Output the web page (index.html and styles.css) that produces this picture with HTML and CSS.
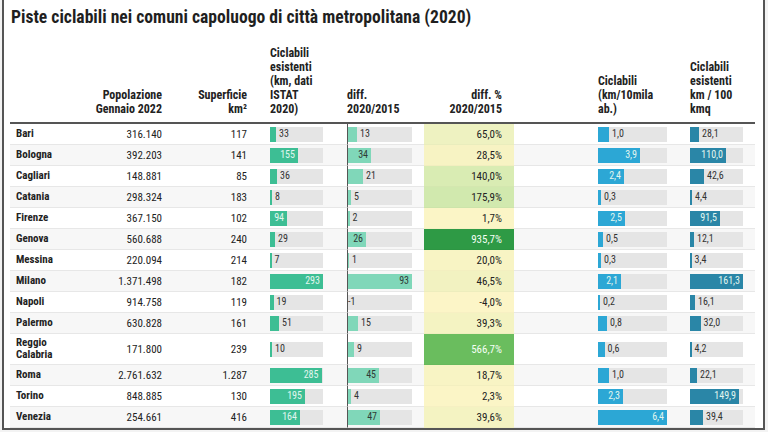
FILE: index.html
```html
<!DOCTYPE html>
<html lang="it">
<head>
<meta charset="utf-8">
<title>Piste ciclabili</title>
<link rel="stylesheet" href="styles.css">
</head>
<body>
<div class="frame">
  <h1 class="title">Piste ciclabili nei comuni capoluogo di città metropolitana (2020)</h1>
  <table class="data">
    <colgroup>
      <col class="w-city"><col class="w-pop"><col class="w-sup"><col class="w-km"><col class="w-diff"><col class="w-pct"><col class="w-ab"><col class="w-kmq">
    </colgroup>
    <thead>
      <tr>
        <th class="c-city"></th>
        <th class="c-pop">Popolazione<br>Gennaio 2022</th>
        <th class="c-sup">Superficie<br>km²</th>
        <th class="c-km">Ciclabili<br>esistenti<br>(km, dati<br>ISTAT<br>2020)</th>
        <th class="c-diff">diff.<br>2020/2015</th>
        <th class="c-pct">diff. %<br>2020/2015</th>
        <th class="c-ab">Ciclabili<br>(km/10mila<br>ab.)</th>
        <th class="c-kmq">Ciclabili<br>esistenti<br>km / 100<br>kmq</th>
      </tr>
    </thead>
    <tbody>
      <tr>
        <td class="c-city">Bari</td><td class="c-pop">316.140</td><td class="c-sup">117</td>
        <td class="c-km"><div class="track t-km"><div class="bar b-km" style="width:6px"></div><span class="lbl">33</span></div></td>
        <td class="c-diff"><div class="track t-diff"><div class="bar b-diff" style="width:9px"></div><span class="lbl">13</span></div></td>
        <td class="c-pct" style="background:#eef2c1">65,0%</td>
        <td class="c-ab"><div class="track t-ab"><div class="bar b-ab" style="width:11px"></div><span class="lbl">1,0</span></div></td>
        <td class="c-kmq"><div class="track t-kmq"><div class="bar b-kmq" style="width:9px"></div><span class="lbl">28,1</span></div></td>
      </tr>
      <tr>
        <td class="c-city">Bologna</td><td class="c-pop">392.203</td><td class="c-sup">141</td>
        <td class="c-km"><div class="track t-km"><div class="bar b-km" style="width:28px"><span class="lbl in">155</span></div></div></td>
        <td class="c-diff"><div class="track t-diff"><div class="bar b-diff" style="width:23px"><span class="lbl in dark">34</span></div></div></td>
        <td class="c-pct" style="background:#f7f3c3">28,5%</td>
        <td class="c-ab"><div class="track t-ab"><div class="bar b-ab" style="width:42px"><span class="lbl in">3,9</span></div></div></td>
        <td class="c-kmq"><div class="track t-kmq"><div class="bar b-kmq" style="width:36px"><span class="lbl in">110,0</span></div></div></td>
      </tr>
      <tr>
        <td class="c-city">Cagliari</td><td class="c-pop">148.881</td><td class="c-sup">85</td>
        <td class="c-km"><div class="track t-km"><div class="bar b-km" style="width:7px"></div><span class="lbl">36</span></div></td>
        <td class="c-diff"><div class="track t-diff"><div class="bar b-diff" style="width:15px"></div><span class="lbl">21</span></div></td>
        <td class="c-pct" style="background:#d9ecb3">140,0%</td>
        <td class="c-ab"><div class="track t-ab"><div class="bar b-ab" style="width:26px"><span class="lbl in">2,4</span></div></div></td>
        <td class="c-kmq"><div class="track t-kmq"><div class="bar b-kmq" style="width:14px"></div><span class="lbl">42,6</span></div></td>
      </tr>
      <tr>
        <td class="c-city">Catania</td><td class="c-pop">298.324</td><td class="c-sup">183</td>
        <td class="c-km"><div class="track t-km"><div class="bar b-km" style="width:2px"></div><span class="lbl">8</span></div></td>
        <td class="c-diff"><div class="track t-diff"><div class="bar b-diff" style="width:3px"></div><span class="lbl">5</span></div></td>
        <td class="c-pct" style="background:#d1e9ae">175,9%</td>
        <td class="c-ab"><div class="track t-ab"><div class="bar b-ab" style="width:3px"></div><span class="lbl">0,3</span></div></td>
        <td class="c-kmq"><div class="track t-kmq"><div class="bar b-kmq" style="width:2px"></div><span class="lbl">4,4</span></div></td>
      </tr>
      <tr>
        <td class="c-city">Firenze</td><td class="c-pop">367.150</td><td class="c-sup">102</td>
        <td class="c-km"><div class="track t-km"><div class="bar b-km" style="width:17px"><span class="lbl in">94</span></div></div></td>
        <td class="c-diff"><div class="track t-diff"><div class="bar b-diff" style="width:1.5px"></div><span class="lbl">2</span></div></td>
        <td class="c-pct" style="background:#fbf5c6">1,7%</td>
        <td class="c-ab"><div class="track t-ab"><div class="bar b-ab" style="width:27px"><span class="lbl in">2,5</span></div></div></td>
        <td class="c-kmq"><div class="track t-kmq"><div class="bar b-kmq" style="width:30px"><span class="lbl in">91,5</span></div></div></td>
      </tr>
      <tr>
        <td class="c-city">Genova</td><td class="c-pop">560.688</td><td class="c-sup">240</td>
        <td class="c-km"><div class="track t-km"><div class="bar b-km" style="width:5px"></div><span class="lbl">29</span></div></td>
        <td class="c-diff"><div class="track t-diff"><div class="bar b-diff" style="width:18px"><span class="lbl in dark">26</span></div></div></td>
        <td class="c-pct light" style="background:#2e9a45">935,7%</td>
        <td class="c-ab"><div class="track t-ab"><div class="bar b-ab" style="width:5px"></div><span class="lbl">0,5</span></div></td>
        <td class="c-kmq"><div class="track t-kmq"><div class="bar b-kmq" style="width:4px"></div><span class="lbl">12,1</span></div></td>
      </tr>
      <tr>
        <td class="c-city">Messina</td><td class="c-pop">220.094</td><td class="c-sup">214</td>
        <td class="c-km"><div class="track t-km"><div class="bar b-km" style="width:1.5px"></div><span class="lbl">7</span></div></td>
        <td class="c-diff"><div class="track t-diff"><div class="bar b-diff" style="width:1px"></div><span class="lbl">1</span></div></td>
        <td class="c-pct" style="background:#f8f4c4">20,0%</td>
        <td class="c-ab"><div class="track t-ab"><div class="bar b-ab" style="width:3px"></div><span class="lbl">0,3</span></div></td>
        <td class="c-kmq"><div class="track t-kmq"><div class="bar b-kmq" style="width:1.5px"></div><span class="lbl">3,4</span></div></td>
      </tr>
      <tr>
        <td class="c-city">Milano</td><td class="c-pop">1.371.498</td><td class="c-sup">182</td>
        <td class="c-km"><div class="track t-km"><div class="bar b-km" style="width:53px"><span class="lbl in">293</span></div></div></td>
        <td class="c-diff"><div class="track t-diff"><div class="bar b-diff" style="width:64px"><span class="lbl in dark">93</span></div></div></td>
        <td class="c-pct" style="background:#f2f2c1">46,5%</td>
        <td class="c-ab"><div class="track t-ab"><div class="bar b-ab" style="width:23px"><span class="lbl in">2,1</span></div></div></td>
        <td class="c-kmq"><div class="track t-kmq"><div class="bar b-kmq" style="width:53px"><span class="lbl in">161,3</span></div></div></td>
      </tr>
      <tr>
        <td class="c-city">Napoli</td><td class="c-pop">914.758</td><td class="c-sup">119</td>
        <td class="c-km"><div class="track t-km"><div class="bar b-km" style="width:3.5px"></div><span class="lbl">19</span></div></td>
        <td class="c-diff"><div class="track t-diff"><span class="lbl neg">-1</span></div></td>
        <td class="c-pct" style="background:#fcf5c7">-4,0%</td>
        <td class="c-ab"><div class="track t-ab"><div class="bar b-ab" style="width:2px"></div><span class="lbl">0,2</span></div></td>
        <td class="c-kmq"><div class="track t-kmq"><div class="bar b-kmq" style="width:5px"></div><span class="lbl">16,1</span></div></td>
      </tr>
      <tr>
        <td class="c-city">Palermo</td><td class="c-pop">630.828</td><td class="c-sup">161</td>
        <td class="c-km"><div class="track t-km"><div class="bar b-km" style="width:9px"></div><span class="lbl">51</span></div></td>
        <td class="c-diff"><div class="track t-diff"><div class="bar b-diff" style="width:10px"></div><span class="lbl">15</span></div></td>
        <td class="c-pct" style="background:#f4f3c2">39,3%</td>
        <td class="c-ab"><div class="track t-ab"><div class="bar b-ab" style="width:9px"></div><span class="lbl">0,8</span></div></td>
        <td class="c-kmq"><div class="track t-kmq"><div class="bar b-kmq" style="width:10.5px"></div><span class="lbl">32,0</span></div></td>
      </tr>
      <tr class="tall">
        <td class="c-city">Reggio<br>Calabria</td><td class="c-pop">171.800</td><td class="c-sup">239</td>
        <td class="c-km"><div class="track t-km"><div class="bar b-km" style="width:2px"></div><span class="lbl">10</span></div></td>
        <td class="c-diff"><div class="track t-diff"><div class="bar b-diff" style="width:6px"></div><span class="lbl">9</span></div></td>
        <td class="c-pct light" style="background:#6abd5e">566,7%</td>
        <td class="c-ab"><div class="track t-ab"><div class="bar b-ab" style="width:6.5px"></div><span class="lbl">0,6</span></div></td>
        <td class="c-kmq"><div class="track t-kmq"><div class="bar b-kmq" style="width:1.5px"></div><span class="lbl">4,2</span></div></td>
      </tr>
      <tr>
        <td class="c-city">Roma</td><td class="c-pop">2.761.632</td><td class="c-sup">1.287</td>
        <td class="c-km"><div class="track t-km"><div class="bar b-km" style="width:51.5px"><span class="lbl in">285</span></div></div></td>
        <td class="c-diff"><div class="track t-diff"><div class="bar b-diff" style="width:31px"><span class="lbl in dark">45</span></div></div></td>
        <td class="c-pct" style="background:#f8f4c4">18,7%</td>
        <td class="c-ab"><div class="track t-ab"><div class="bar b-ab" style="width:11px"></div><span class="lbl">1,0</span></div></td>
        <td class="c-kmq"><div class="track t-kmq"><div class="bar b-kmq" style="width:7px"></div><span class="lbl">22,1</span></div></td>
      </tr>
      <tr>
        <td class="c-city">Torino</td><td class="c-pop">848.885</td><td class="c-sup">130</td>
        <td class="c-km"><div class="track t-km"><div class="bar b-km" style="width:35px"><span class="lbl in">195</span></div></div></td>
        <td class="c-diff"><div class="track t-diff"><div class="bar b-diff" style="width:3px"></div><span class="lbl">4</span></div></td>
        <td class="c-pct" style="background:#fbf5c6">2,3%</td>
        <td class="c-ab"><div class="track t-ab"><div class="bar b-ab" style="width:25px"><span class="lbl in">2,3</span></div></div></td>
        <td class="c-kmq"><div class="track t-kmq"><div class="bar b-kmq" style="width:49px"><span class="lbl in">149,9</span></div></div></td>
      </tr>
      <tr>
        <td class="c-city">Venezia</td><td class="c-pop">254.661</td><td class="c-sup">416</td>
        <td class="c-km"><div class="track t-km"><div class="bar b-km" style="width:30px"><span class="lbl in">164</span></div></div></td>
        <td class="c-diff"><div class="track t-diff"><div class="bar b-diff" style="width:32px"><span class="lbl in dark">47</span></div></div></td>
        <td class="c-pct" style="background:#f4f3c2">39,6%</td>
        <td class="c-ab"><div class="track t-ab"><div class="bar b-ab" style="width:69px"><span class="lbl in">6,4</span></div></div></td>
        <td class="c-kmq"><div class="track t-kmq"><div class="bar b-kmq" style="width:13px"></div><span class="lbl">39,4</span></div></td>
      </tr>
    </tbody>
  </table>
</div>
</body>
</html>
```

FILE: styles.css
```css
html, body {
  margin: 0;
  padding: 0;
}

body {
  background: #f3f3f3;
  font-family: "Roboto Condensed", "Liberation Sans Narrow", Roboto, sans-serif;
  color: #222;
}

.frame {
  margin-left: 2px;
  width: 759px;
  height: 428px;
  background: #fff;
  border: 2px solid #555;
  border-top: 0;
  overflow: hidden;
}

.title {
  margin: 0;
  padding: 7px 0 0 7px;
  font-size: 17.6px;
  line-height: 20px;
  font-weight: 700;
  color: #1f1f1f;
}

.data {
  margin: 19px 0 0 6px;
  width: 745px;
  table-layout: fixed;
  border-collapse: separate;
  border-spacing: 0;
}

.w-city { width: 65px; }
.w-pop { width: 92px; }
.w-sup { width: 98px; }
.w-km { width: 82px; }
.w-diff { width: 77px; }
.w-pct { width: 90px; }
.w-ab { width: 171px; }
.w-kmq { width: 70px; }

.data th {
  font-size: 12px;
  line-height: 14px;
  font-weight: 700;
  color: #222;
  white-space: nowrap;
  vertical-align: bottom;
  text-align: left;
  padding: 0 0 6px 0;
  border-bottom: 2px solid #555;
}

.data td {
  height: 20px;
  padding: 0;
  font-size: 11px;
  line-height: 13px;
  vertical-align: middle;
  border-bottom: 1px solid #e7e7e7;
  white-space: nowrap;
}

.data tbody tr:nth-child(even) td {
  background: #f7f7f7;
}

.data tr.tall td {
  height: 30px;
}

.c-city {
  padding-left: 6px !important;
  font-weight: 700;
}

.data td.c-city {
  white-space: normal;
  line-height: 12px;
}

.c-pop {
  text-align: right !important;
  padding-right: 5px !important;
}

.c-sup {
  text-align: right !important;
  padding-right: 18px !important;
}

.c-km {
  padding-left: 5px !important;
}

.data td.c-diff {
  border-left: 1px solid #555;
}

.c-pct {
  text-align: right !important;
  padding-right: 12px !important;
}

.data td.c-pct {
  border-bottom-color: rgba(0, 0, 0, 0.02);
}

.data td.light {
  color: #f4fff4;
}

.c-ab {
  padding-left: 84px !important;
}

.c-kmq {
  padding-left: 5px !important;
}

.track {
  display: flex;
  align-items: center;
  height: 15px;
  background: #e5e5e5;
}

.t-km { width: 53px; }
.t-diff { width: 64px; }
.t-ab { width: 69px; }
.t-kmq { width: 53px; }

.bar {
  flex: none;
  height: 100%;
  display: flex;
  align-items: center;
  justify-content: flex-end;
}

.b-km { background: #3dbe94; }
.b-diff { background: #80d7b9; }
.b-ab { background: #2ca7d5; }
.b-kmq { background: #2a86a7; }

.lbl {
  font-size: 10px;
  line-height: 12px;
  color: #333;
  padding-left: 3px;
}

.lbl.in {
  padding: 0 3px 0 0;
  color: #e2f6ef;
}

.lbl.in.dark {
  color: #2f3b36;
}

.lbl.neg {
  padding-left: 0;
}
```
